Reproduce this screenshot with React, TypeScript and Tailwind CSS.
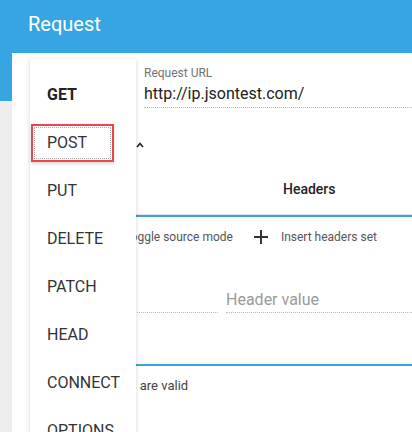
const methods = ['GET', 'POST', 'PUT', 'DELETE', 'PATCH', 'HEAD', 'CONNECT', 'OPTIONS']

function MethodMenu() {
  return (
    <div className="absolute left-[18px] top-[6px] w-[106px] h-[400px] bg-white shadow-[0_1px_4px_rgba(0,0,0,0.18)] pt-[12px]">
      {methods.map((m) => (
        <div key={m} className="h-[48px] flex items-center pl-[17px]">
          {m === 'POST' ? (
            <div className="-ml-[16px] w-[83px] h-[38px] border-2 border-[#e9454b] p-[1px] shadow-[0_2px_3px_rgba(0,0,0,0.15)]">
              <div className="h-full border border-dotted border-[#aaa] flex items-center pl-[12px]">
                <span className="text-[16px] text-[#333]">{m}</span>
              </div>
            </div>
          ) : (
            <span className={m === 'GET' ? 'text-[16px] font-bold text-[#222]' : 'text-[16px] text-[#333]'}>{m}</span>
          )}
        </div>
      ))}
    </div>
  )
}

export default function App() {
  return (
    <div className="w-[412px] h-[432px] overflow-hidden bg-white font-['Roboto',sans-serif]">
      <div className="h-[53px] bg-[#38a5e3] pl-[28px] pt-[10px]">
        <span className="text-white text-[20px] leading-[28px]">Request</span>
      </div>
      <div className="flex h-[379px]">
        <div className="w-[12px] flex flex-col">
          <div className="h-[48px] bg-[#38a5e3]" />
          <div className="flex-1 bg-[#eeeeee]" />
        </div>
        <div className="relative flex-1 bg-white">
          <div className="pl-[22px]">
            <div className="flex pt-[12px]">
              <div className="w-[110px]" />
              <div className="flex-1">
                <div className="text-[12px] text-[#737373] leading-[16px]">Request URL</div>
                <div className="text-[16px] text-[#222] leading-[20px] mt-[3px]">http://ip.jsontest.com/</div>
                <div className="border-b border-dotted border-[#bbb] mt-[3px]" />
              </div>
            </div>
            <div className="h-[59px] pt-[34px] pl-[102px]">
              <svg width="9" height="6" viewBox="0 0 9 6" className="block">
                <path d="M1 5 L4 1.5 L7 5" stroke="#222" strokeWidth="1.6" fill="none" />
              </svg>
            </div>
            <div className="h-[48px] flex items-center pl-[249px] border-b border-[#e0e0e0]">
              <span className="text-[14px] font-medium text-[#222] -mt-[2px]">Headers</span>
            </div>
            <div className="h-[2px] bg-[#38a5e3]" />
            <div className="flex items-center h-[40px] pl-[90px] text-[12px] text-[#555]">
              <span>Toggle source mode</span>
              <svg width="14" height="14" viewBox="0 0 14 14" className="ml-[21px]">
                <path d="M7 0 V14 M0 7 H14" stroke="#333" strokeWidth="2" />
              </svg>
              <span className="ml-[13px]">Insert headers set</span>
            </div>
            <div className="flex gap-[8px] mt-[16px]">
              <div className="w-[184px] border-b border-dotted border-[#bbb] h-[40px]" />
              <div className="flex-1 border-b border-dotted border-[#bbb] h-[40px] pt-[17px] text-[16px] text-[#9a9a9a] leading-[20px]">Header value</div>
            </div>
            <div className="h-[2px] bg-[#38a5e3] mt-[51px]" />
            <div className="text-[13px] text-[#444] mt-[11px] pl-[38px] leading-[18px]">All headers are valid</div>
          </div>
          <MethodMenu />
        </div>
      </div>
    </div>
  )
}
